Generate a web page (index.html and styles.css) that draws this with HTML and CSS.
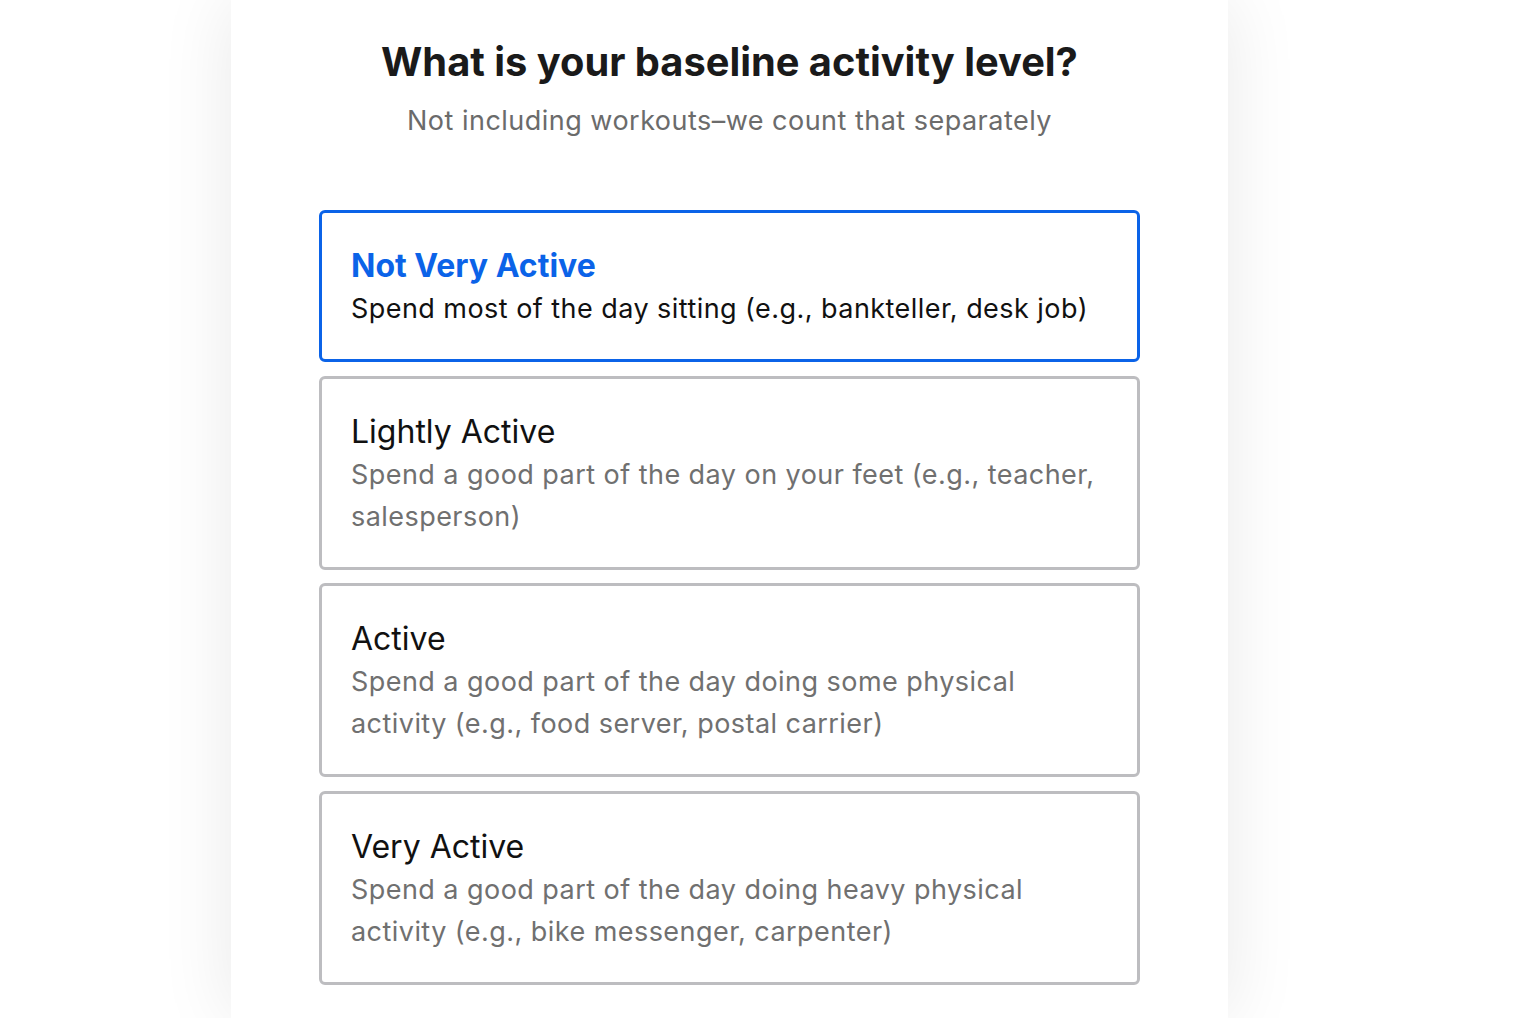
FILE: index.html
```html
<!DOCTYPE html>
<html lang="en">
  <head>
    <meta charset="UTF-8" />
    <meta name="viewport" content="width=device-width, initial-scale=1.0" />
    <title>Activity Level</title>
    <link rel="stylesheet" href="styles.css">
  </head>
  <body>
    <div class="panel">
      <h1 class="question">What is your baseline activity level?</h1>
      <p class="hint">Not including workouts–we count that separately</p>

      <!-- Options -->
      <div class="options">
        <div class="option selected">
          <div class="option-title">Not Very Active</div>
          <div class="option-desc">Spend most of the day sitting (e.g., bankteller, desk job)</div>
        </div>
        <div class="option">
          <div class="option-title">Lightly Active</div>
          <div class="option-desc">Spend a good part of the day on your feet (e.g., teacher, salesperson)</div>
        </div>
        <div class="option">
          <div class="option-title">Active</div>
          <div class="option-desc">Spend a good part of the day doing some physical activity (e.g., food server, postal carrier)</div>
        </div>
        <div class="option">
          <div class="option-title">Very Active</div>
          <div class="option-desc">Spend a good part of the day doing heavy physical activity (e.g., bike messenger, carpenter)</div>
        </div>
      </div>
    </div>
  </body>
</html>
```

FILE: styles.css
```css
body {
  font-family: Inter, "Noto Sans", Arial, sans-serif;
  margin: 0;
  padding: 0;
  background-color: #ffffff;
  overflow: hidden;
}

.panel {
  box-sizing: border-box;
  width: 997px;
  min-height: 1018px;
  margin-left: 231px;
  padding: 38px 88px 0;
  background-color: #ffffff;
  box-shadow: 0 0 70px rgba(0, 0, 0, 0.09);
}

.question {
  margin: 0;
  text-align: center;
  font-size: 39.8px;
  font-weight: 700;
  color: #1a1a1a;
  line-height: 48px;
}

.hint {
  margin: 15px 0 0;
  text-align: center;
  font-size: 27px;
  line-height: 40px;
  letter-spacing: 0.48px;
  color: #6b6b6b;
}

/* Options */
.options {
  display: flex;
  flex-direction: column;
  gap: 13.5px;
  margin-top: 69px;
}

.option {
  border: 3px solid #bdbdc0;
  border-radius: 6px;
  padding: 32px 29px 29px;
  cursor: pointer;
}

.option.selected {
  border-color: #0b63e8;
}

.option-title {
  font-size: 32px;
  line-height: 42px;
  color: #111111;
  margin-bottom: 1px;
}

.option.selected .option-title {
  color: #0b63e8;
  font-weight: 700;
}

.option-desc {
  font-size: 27px;
  line-height: 42px;
  letter-spacing: 0.45px;
  color: #707070;
}

.option.selected .option-desc {
  color: #111111;
}
```
